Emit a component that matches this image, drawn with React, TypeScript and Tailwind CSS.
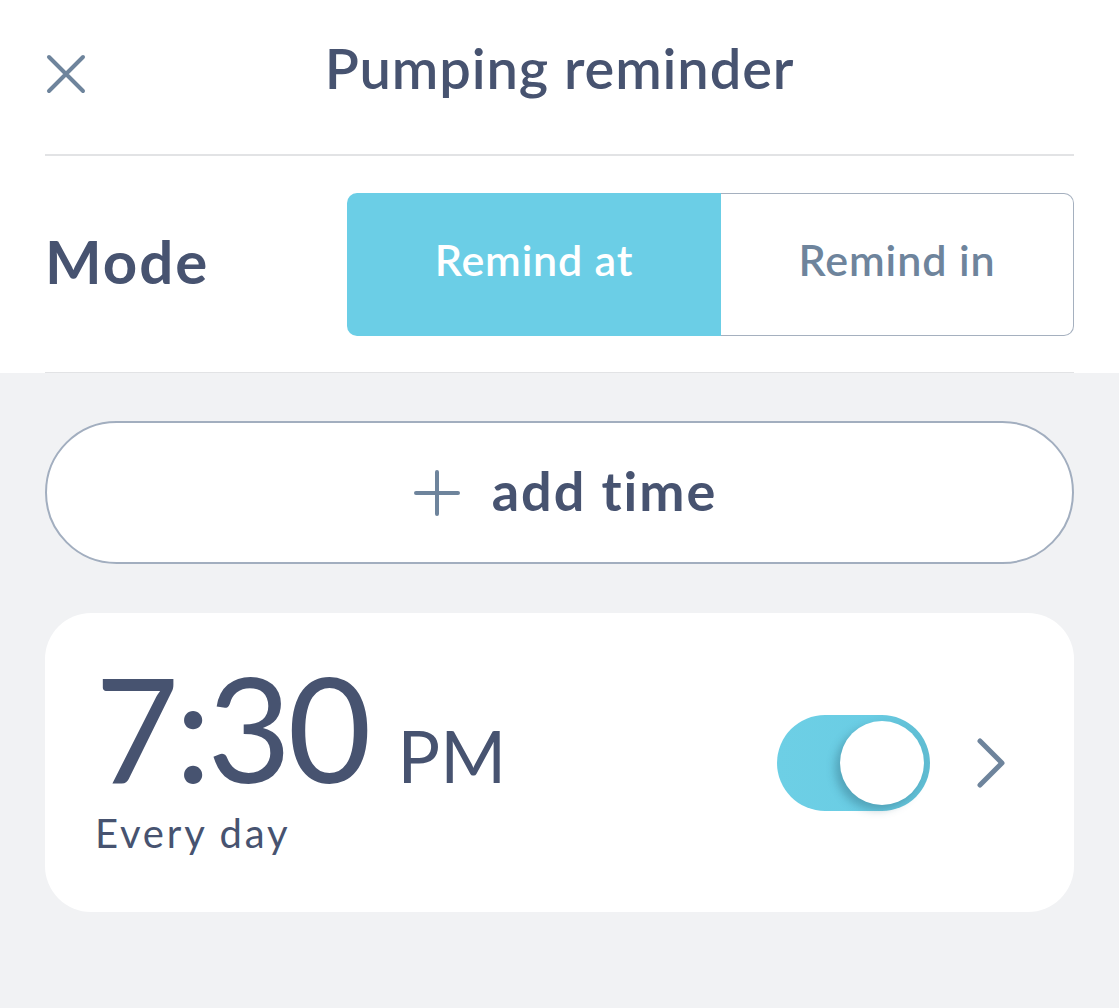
import React from "react";

export default function App() {
  const font = { fontFamily: "Lato, 'Open Sans', sans-serif" };
  return (
    <div className="min-h-[1008px] w-full bg-[#f1f2f4]" style={font}>
      <div className="bg-white px-[45px]">
        <div className="grid h-[154px] grid-cols-[60px_1fr_60px] items-start pt-[40px]">
          <svg width="40" height="40" viewBox="0 0 40 40" className="ml-[1px] mt-[14px]">
            <path d="M3 3 L37 37 M37 3 L3 37" stroke="#6e849c" strokeWidth="4" strokeLinecap="round" fill="none" />
          </svg>
          <div className="text-center text-[56px] font-semibold leading-none tracking-[0.9px] text-[#475370]">Pumping reminder</div>
          <div />
        </div>
        <div className="h-[2px] bg-[#e2e3e5]" />
        <div className="flex h-[216px] items-center justify-between">
          <div className="mb-[6px] text-[60px] font-bold leading-none tracking-[2px] text-[#475370]">Mode</div>
          <div className="flex h-[143px] w-[727px]">
            <div className="flex w-[374px] items-center justify-center rounded-l-[10px] bg-[#6bcee6] pb-[10px] text-[43px] font-semibold leading-none tracking-[0.8px] text-white">
              Remind at
            </div>
            <div className="flex flex-1 items-center justify-center rounded-r-[10px] border border-l-0 border-[#a5b0bf] bg-white pb-[10px] text-[43px] font-semibold leading-none tracking-[0.9px] text-[#6e849c]">
              Remind in
            </div>
          </div>
        </div>
        <div className="h-[1px] bg-[#e2e3e5]" />
      </div>
      <div className="px-[45px] pt-[48px]">
        <div className="flex h-[143px] items-center justify-center gap-[32px] rounded-full border-2 border-[#a2aebf] bg-white pl-[12px]">
          <svg width="46" height="46" viewBox="0 0 46 46">
            <path d="M23 2 V44 M2 23 H44" stroke="#6e849c" strokeWidth="4" strokeLinecap="round" fill="none" />
          </svg>
          <span className="mb-[4px] text-[54px] font-bold leading-none tracking-[2px] text-[#475370]">add time</span>
        </div>
        <div className="mt-[49px] flex h-[299px] items-center justify-between rounded-[46px] bg-white pl-[50px] pr-[68px]">
          <div className="mb-[18px] flex flex-col text-[#475370]">
            <div className="flex items-baseline">
              <span className="text-[145px] font-normal leading-none tracking-[-4px]">7:30</span>
              <span className="ml-[30px] text-[71px] font-normal leading-none">PM</span>
            </div>
            <div className="mt-[13px] text-[40px] font-normal leading-[40px] tracking-[2.8px]">Every day</div>
          </div>
          <div className="flex items-center gap-[46px]">
            <div className="relative h-[96px] w-[153px] rounded-full bg-[linear-gradient(90deg,#6dcfe5_0%,#6acde4_60%,#5fbcd2_100%)]">
              <div className="absolute right-[6px] top-[6px] h-[84px] w-[84px] rounded-full bg-white shadow-[-5px_5px_8px_rgba(40,90,110,0.35)]" />
            </div>
            <svg width="30" height="52" viewBox="0 0 30 52">
              <path d="M4 4 L26 26 L4 48" stroke="#6e849c" strokeWidth="5" strokeLinecap="round" strokeLinejoin="round" fill="none" />
            </svg>
          </div>
        </div>
      </div>
    </div>
  );
}
